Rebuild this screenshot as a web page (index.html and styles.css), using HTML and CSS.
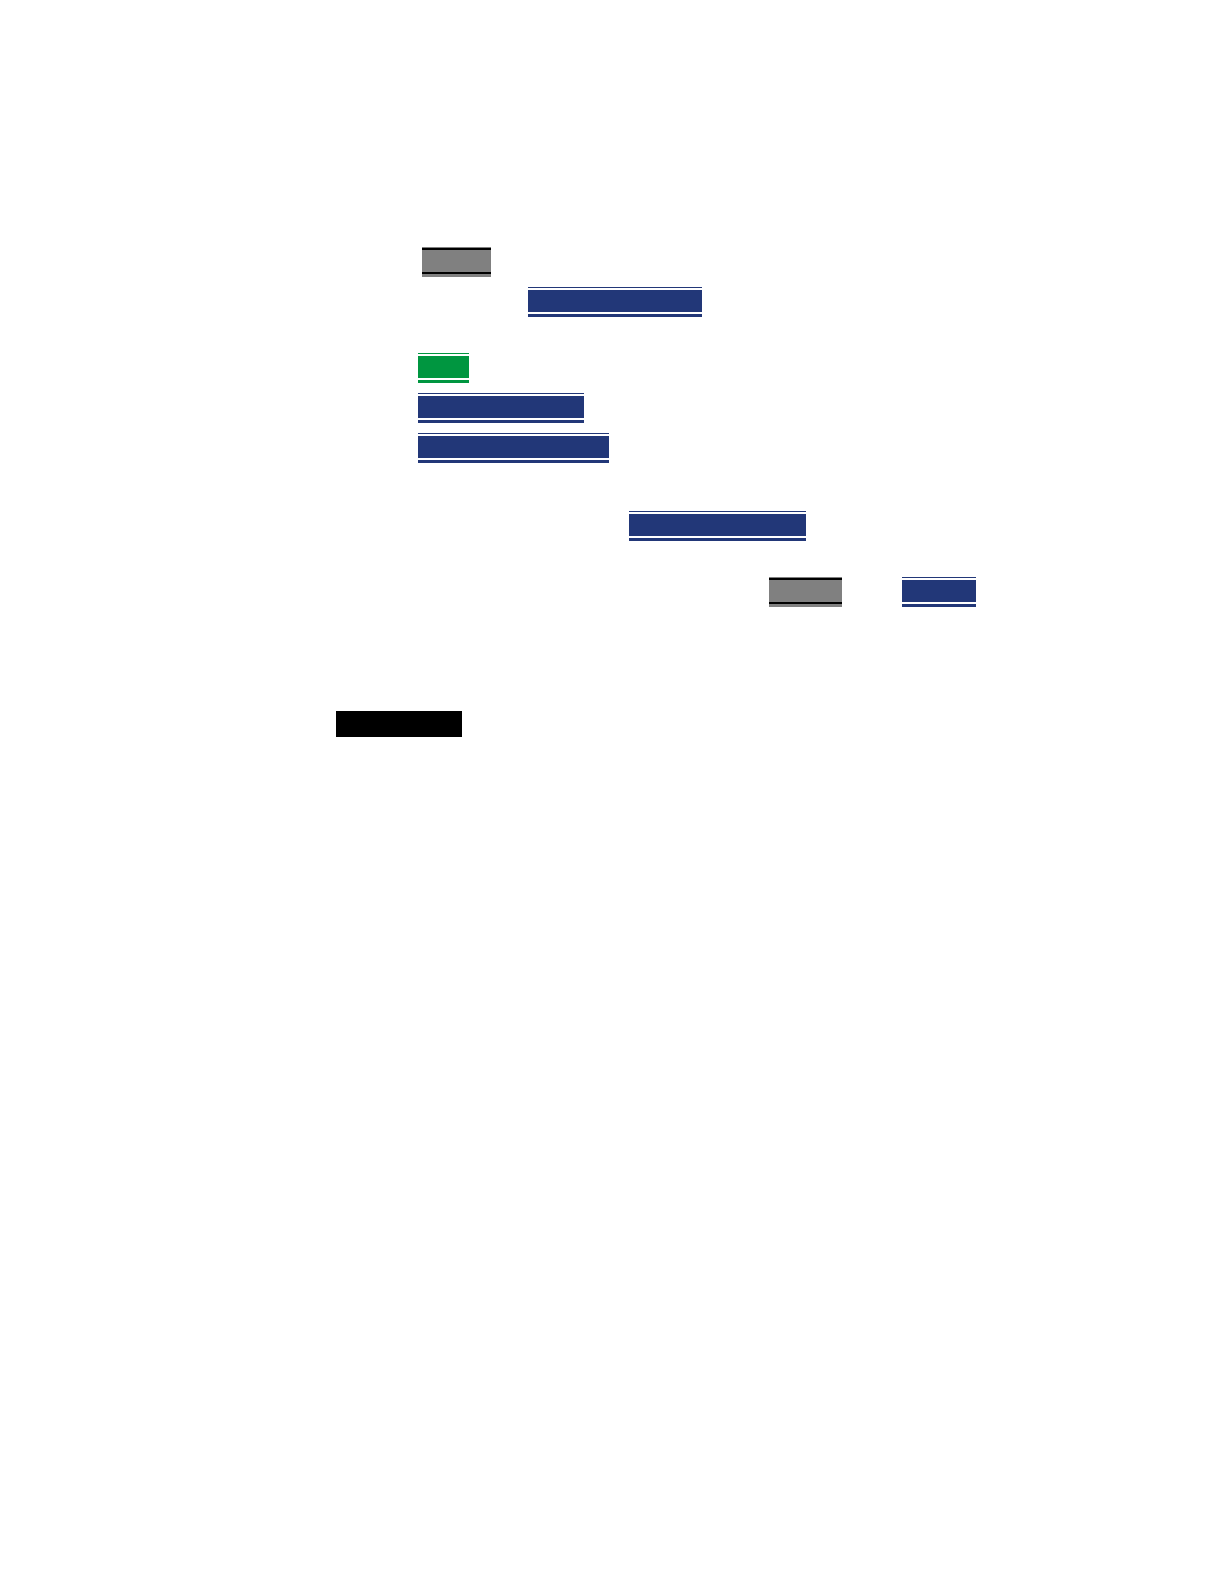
FILE: index.html
```html
<!DOCTYPE html>
<html lang="en">
<head>
    <meta charset="utf-8">
    <meta name="viewport" content="width=device-width, initial-scale=1">
    <title>Key bars</title>
    <link rel="stylesheet" href="styles.css">
</head>
<body>

<main id="main">
    <!--steps-->
    <div class="steps">
        <div class="row">
            <span class="bar key w-key"></span>
        </div>
        <div class="row in-1">
            <span class="bar blue w-174"></span>
        </div>
    </div>

    <!--options-->
    <div class="steps">
        <div class="row">
            <span class="bar green w-51"></span>
        </div>
        <div class="row">
            <span class="bar blue w-166"></span>
        </div>
        <div class="row">
            <span class="bar blue w-191"></span>
        </div>
    </div>

    <div class="steps last">
        <div class="row in-2">
            <span class="bar blue w-177"></span>
        </div>
        <div class="row in-3">
            <span class="bar key w-73"></span>
            <span class="bar blue w-74"></span>
        </div>
    </div>

    <div class="block"></div>
</main>

</body>
</html>
```

FILE: styles.css
```css
*{ margin: 0; padding: 0; box-sizing: border-box;}
body{ background: #fff; font-family: "Liberation Sans", Arial, sans-serif;}

#main{ padding: 247px 40px 80px 336px;}

/*groups of rows*/
.steps{ display: flex; flex-direction: column; gap: 10px; margin: 0 0 36px 82px;}
.steps.last{ gap: 36px; margin-top: 48px; margin-bottom: 104px;}
.row{ display: flex; gap: 60px;}
.in-1{ padding-left: 110px;}
.in-2{ padding-left: 211px;}
.in-3{ padding-left: 347px;}

/*bar: thin line, body, thick line*/
.bar{ display: block; height: 30px; color: #fff;
    background: linear-gradient(currentColor, currentColor) 0 1px / 100% 2px no-repeat,
        linear-gradient(currentColor, currentColor) 0 25px / 100% 2px no-repeat;}
.blue{ background-color: #223778;}
.green{ background-color: #009640;}
.key{ color: #000; background-color: #808080; margin-left: 4px;}

.w-key{ width: 69px;}
.w-51{ width: 51px;}
.w-73{ width: 73px;}
.w-74{ width: 74px;}
.w-166{ width: 166px;}
.w-174{ width: 174px;}
.w-177{ width: 177px;}
.w-191{ width: 191px;}

.block{ width: 126px; height: 26px; background: #000;}
```
